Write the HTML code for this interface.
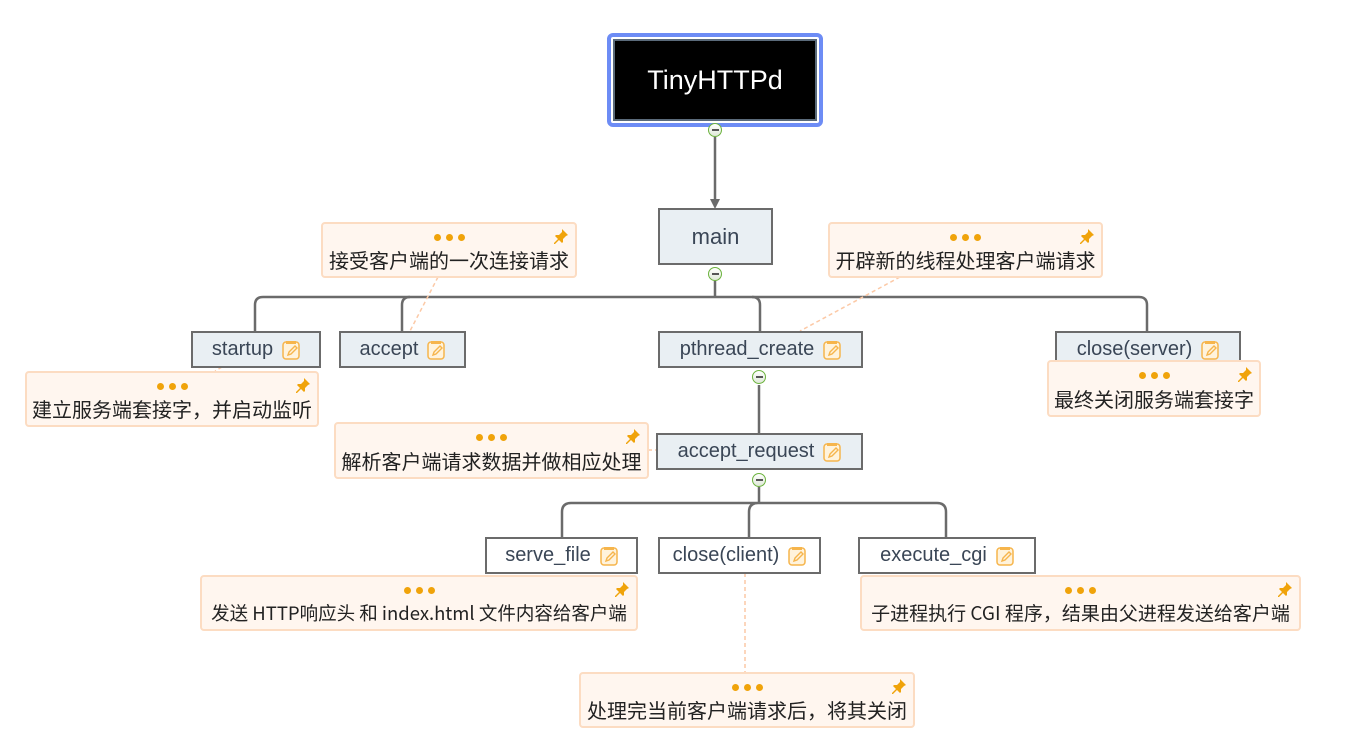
<!DOCTYPE html>
<html><head><meta charset="utf-8"><style>
body{margin:0;width:1353px;height:756px;background:#fff;position:relative;overflow:hidden;font-family:"Liberation Sans","Noto Sans CJK SC",sans-serif;}
.n{position:absolute;box-sizing:border-box;border:2px solid #6b6b6b;background:#e9eff3;color:#3a4656;font-size:20px;display:flex;align-items:center;justify-content:center;white-space:nowrap;}
.w{background:#fff;}
.ic{display:inline-block;width:18px;height:20px;margin-left:9px;vertical-align:middle}
.note{position:absolute;box-sizing:border-box;border:2px solid #fcdcc2;background:#fff6ef;border-radius:4px;color:#222;font-size:20px;font-family:"Noto Sans CJK SC",sans-serif;white-space:nowrap;}
.note .d{position:absolute;top:10px;left:0;right:0;height:8px;display:flex;justify-content:center;gap:5px}
.note .d i{display:block;width:7px;height:7px;border-radius:50%;background:#f0a30a}
.note .t{position:absolute;bottom:3px;left:0;right:0;text-align:center;line-height:26px}
.note svg.p{position:absolute;right:6px;top:4px}
.c{position:absolute;width:14px;height:14px;border-radius:50%;border:1.5px solid #6cb33e;background:linear-gradient(#fff,#dfe8d8);box-sizing:border-box}
.c:after{content:"";position:absolute;left:2.5px;right:2.5px;top:5px;height:1.5px;background:#555}
</style></head><body>
<svg width="1353" height="756" style="position:absolute;left:0;top:0">
<g fill="none" stroke="#6b6b6b" stroke-width="2.5">
<path d="M715 137V200"/>
<path d="M255 331V305q0-8 8-8H1139q8 0 8 8V331"/>
<path d="M715 281V297M402 331V305q0-8 8-8M752 297q8 0 8 8V331"/>
<path d="M759 385V433"/>
<path d="M759 487V503"/>
<path d="M562 537V512q0-9 9-9H937q9 0 9 9V537M749 537V512q0-9 9-9"/>
</g>
<path d="M710 199L715 209L720 199Z" fill="#6b6b6b"/>
<g stroke="#fcc9a6" stroke-width="1.5" stroke-dasharray="4,3" fill="none">
<path d="M438 277L410 331"/><path d="M900 277L800 331"/><path d="M222 367L215 371"/>
<path d="M648 450L656 450"/><path d="M745 573V672"/>
</g>
</svg>
<div style="position:absolute;left:607px;top:33px;width:216px;height:94px;box-sizing:border-box;border:4px solid #6d8cf5;border-radius:6px;background:#fff"></div>
<div style="position:absolute;left:613px;top:39px;width:204px;height:82px;box-sizing:border-box;border:2px solid #5a6a7a;background:#000;color:#fff;font-size:27px;display:flex;align-items:center;justify-content:center">TinyHTTPd</div>
<div class="c" style="left:708px;top:123px"></div>
<div class="n" style="left:658px;top:208px;width:115px;height:57px;font-size:22px">main</div>
<div class="c" style="left:708px;top:267px"></div>

<div class="n" style="left:191px;top:331px;width:130px;height:37px">startup<svg class="ic" viewBox="0 0 18 20"><rect x="1" y="2" width="16" height="17" rx="3" fill="#fff3dc" stroke="#f6b54c" stroke-width="1.5"/><rect x="4" y="1" width="10" height="3" fill="#f6b54c"/><path d="M6 15l1-3 6-6 2 2-6 6z" fill="none" stroke="#f6b54c" stroke-width="1.4"/></svg></div>
<div class="n" style="left:339px;top:331px;width:127px;height:37px">accept<svg class="ic" viewBox="0 0 18 20"><rect x="1" y="2" width="16" height="17" rx="3" fill="#fff3dc" stroke="#f6b54c" stroke-width="1.5"/><rect x="4" y="1" width="10" height="3" fill="#f6b54c"/><path d="M6 15l1-3 6-6 2 2-6 6z" fill="none" stroke="#f6b54c" stroke-width="1.4"/></svg></div>
<div class="n" style="left:658px;top:331px;width:205px;height:37px">pthread_create<svg class="ic" viewBox="0 0 18 20"><rect x="1" y="2" width="16" height="17" rx="3" fill="#fff3dc" stroke="#f6b54c" stroke-width="1.5"/><rect x="4" y="1" width="10" height="3" fill="#f6b54c"/><path d="M6 15l1-3 6-6 2 2-6 6z" fill="none" stroke="#f6b54c" stroke-width="1.4"/></svg></div>
<div class="n" style="left:1055px;top:331px;width:186px;height:37px">close(server)<svg class="ic" viewBox="0 0 18 20"><rect x="1" y="2" width="16" height="17" rx="3" fill="#fff3dc" stroke="#f6b54c" stroke-width="1.5"/><rect x="4" y="1" width="10" height="3" fill="#f6b54c"/><path d="M6 15l1-3 6-6 2 2-6 6z" fill="none" stroke="#f6b54c" stroke-width="1.4"/></svg></div>
<div class="c" style="left:752px;top:370px"></div>
<div class="n" style="left:656px;top:433px;width:207px;height:37px">accept_request<svg class="ic" viewBox="0 0 18 20"><rect x="1" y="2" width="16" height="17" rx="3" fill="#fff3dc" stroke="#f6b54c" stroke-width="1.5"/><rect x="4" y="1" width="10" height="3" fill="#f6b54c"/><path d="M6 15l1-3 6-6 2 2-6 6z" fill="none" stroke="#f6b54c" stroke-width="1.4"/></svg></div>
<div class="c" style="left:752px;top:473px"></div>
<div class="n w" style="left:485px;top:537px;width:153px;height:37px">serve_file<svg class="ic" viewBox="0 0 18 20"><rect x="1" y="2" width="16" height="17" rx="3" fill="#fff3dc" stroke="#f6b54c" stroke-width="1.5"/><rect x="4" y="1" width="10" height="3" fill="#f6b54c"/><path d="M6 15l1-3 6-6 2 2-6 6z" fill="none" stroke="#f6b54c" stroke-width="1.4"/></svg></div>
<div class="n w" style="left:658px;top:537px;width:163px;height:37px">close(client)<svg class="ic" viewBox="0 0 18 20"><rect x="1" y="2" width="16" height="17" rx="3" fill="#fff3dc" stroke="#f6b54c" stroke-width="1.5"/><rect x="4" y="1" width="10" height="3" fill="#f6b54c"/><path d="M6 15l1-3 6-6 2 2-6 6z" fill="none" stroke="#f6b54c" stroke-width="1.4"/></svg></div>
<div class="n w" style="left:858px;top:537px;width:178px;height:37px">execute_cgi<svg class="ic" viewBox="0 0 18 20"><rect x="1" y="2" width="16" height="17" rx="3" fill="#fff3dc" stroke="#f6b54c" stroke-width="1.5"/><rect x="4" y="1" width="10" height="3" fill="#f6b54c"/><path d="M6 15l1-3 6-6 2 2-6 6z" fill="none" stroke="#f6b54c" stroke-width="1.4"/></svg></div>

<div class="note" style="left:321px;top:222px;width:256px;height:56px"><div class="d"><i></i><i></i><i></i></div><svg class="p" width="16" height="16" viewBox="0 0 16 16"><path d="M9 1l6 6-2 1-3 3 0 3-1 1-3-3-4 4-1 0 0-1 4-4-3-3 1-1 3 0 3-3z" fill="#f0a30a"/></svg><div class="t">接受客户端的一次连接请求</div></div>
<div class="note" style="left:828px;top:222px;width:275px;height:56px"><div class="d"><i></i><i></i><i></i></div><svg class="p" width="16" height="16" viewBox="0 0 16 16"><path d="M9 1l6 6-2 1-3 3 0 3-1 1-3-3-4 4-1 0 0-1 4-4-3-3 1-1 3 0 3-3z" fill="#f0a30a"/></svg><div class="t">开辟新的线程处理客户端请求</div></div>
<div class="note" style="left:25px;top:371px;width:294px;height:56px"><div class="d"><i></i><i></i><i></i></div><svg class="p" width="16" height="16" viewBox="0 0 16 16"><path d="M9 1l6 6-2 1-3 3 0 3-1 1-3-3-4 4-1 0 0-1 4-4-3-3 1-1 3 0 3-3z" fill="#f0a30a"/></svg><div class="t">建立服务端套接字，并启动监听</div></div>
<div class="note" style="left:1047px;top:360px;width:214px;height:57px"><div class="d"><i></i><i></i><i></i></div><svg class="p" width="16" height="16" viewBox="0 0 16 16"><path d="M9 1l6 6-2 1-3 3 0 3-1 1-3-3-4 4-1 0 0-1 4-4-3-3 1-1 3 0 3-3z" fill="#f0a30a"/></svg><div class="t">最终关闭服务端套接字</div></div>
<div class="note" style="left:334px;top:422px;width:315px;height:57px"><div class="d"><i></i><i></i><i></i></div><svg class="p" width="16" height="16" viewBox="0 0 16 16"><path d="M9 1l6 6-2 1-3 3 0 3-1 1-3-3-4 4-1 0 0-1 4-4-3-3 1-1 3 0 3-3z" fill="#f0a30a"/></svg><div class="t">解析客户端请求数据并做相应处理</div></div>
<div class="note" style="left:200px;top:575px;width:438px;height:56px;font-size:18.5px"><div class="d"><i></i><i></i><i></i></div><svg class="p" width="16" height="16" viewBox="0 0 16 16"><path d="M9 1l6 6-2 1-3 3 0 3-1 1-3-3-4 4-1 0 0-1 4-4-3-3 1-1 3 0 3-3z" fill="#f0a30a"/></svg><div class="t">发送 HTTP响应头 和 index.html 文件内容给客户端</div></div>
<div class="note" style="left:860px;top:575px;width:441px;height:56px;font-size:19px"><div class="d"><i></i><i></i><i></i></div><svg class="p" width="16" height="16" viewBox="0 0 16 16"><path d="M9 1l6 6-2 1-3 3 0 3-1 1-3-3-4 4-1 0 0-1 4-4-3-3 1-1 3 0 3-3z" fill="#f0a30a"/></svg><div class="t">子进程执行 CGI 程序，结果由父进程发送给客户端</div></div>
<div class="note" style="left:579px;top:672px;width:336px;height:56px"><div class="d"><i></i><i></i><i></i></div><svg class="p" width="16" height="16" viewBox="0 0 16 16"><path d="M9 1l6 6-2 1-3 3 0 3-1 1-3-3-4 4-1 0 0-1 4-4-3-3 1-1 3 0 3-3z" fill="#f0a30a"/></svg><div class="t">处理完当前客户端请求后，将其关闭</div></div>
</body></html>
